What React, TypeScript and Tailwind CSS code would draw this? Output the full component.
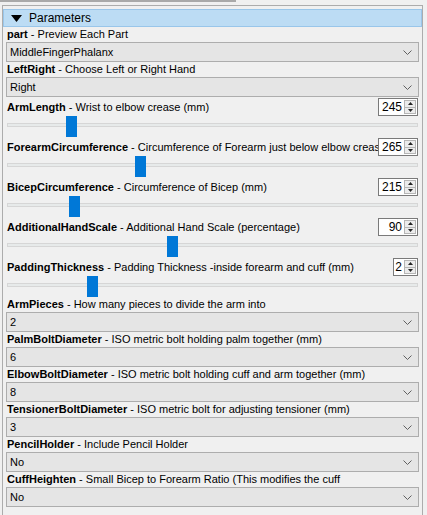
type Row =
  | { kind: 'select'; name: string; desc: string; value: string }
  | { kind: 'slider'; name: string; desc: string; value: number; thumb: number; boxW: number };

const ROWS: Row[] = [
  { kind: 'select', name: 'part', desc: 'Preview Each Part', value: 'MiddleFingerPhalanx' },
  { kind: 'select', name: 'LeftRight', desc: 'Choose Left or Right Hand', value: 'Right' },
  { kind: 'slider', name: 'ArmLength', desc: 'Wrist to elbow crease (mm)', value: 245, thumb: 59, boxW: 40 },
  { kind: 'slider', name: 'ForearmCircumference', desc: 'Circumference of Forearm just below elbow crease (mm)', value: 265, thumb: 128, boxW: 40 },
  { kind: 'slider', name: 'BicepCircumference', desc: 'Circumference of Bicep (mm)', value: 215, thumb: 62, boxW: 40 },
  { kind: 'slider', name: 'AdditionalHandScale', desc: 'Additional Hand Scale (percentage)', value: 90, thumb: 160, boxW: 40 },
  { kind: 'slider', name: 'PaddingThickness', desc: 'Padding Thickness -inside forearm and cuff (mm)', value: 2, thumb: 80, boxW: 25 },
  { kind: 'select', name: 'ArmPieces', desc: 'How many pieces to divide the arm into', value: '2' },
  { kind: 'select', name: 'PalmBoltDiameter', desc: 'ISO metric bolt holding palm together (mm)', value: '6' },
  { kind: 'select', name: 'ElbowBoltDiameter', desc: 'ISO metric bolt holding cuff and arm together (mm)', value: '8' },
  { kind: 'select', name: 'TensionerBoltDiameter', desc: 'ISO metric bolt for adjusting tensioner (mm)', value: '3' },
  { kind: 'select', name: 'PencilHolder', desc: 'Include Pencil Holder', value: 'No' },
  { kind: 'select', name: 'CuffHeighten', desc: 'Small Bicep to Forearm Ratio (This modifies the cuff', value: 'No' },
];

function Label({ name, desc }: { name: string; desc: string }) {
  return (
    <span className="whitespace-nowrap">
      <b className="font-bold">{name}</b> - {desc}
    </span>
  );
}

function Chevron() {
  return (
    <svg width="9" height="5" viewBox="0 0 9 5" fill="none" stroke="#606060" strokeWidth="1">
      <polyline points="0.5,0.5 4.5,4.5 8.5,0.5" />
    </svg>
  );
}

function SelectRow({ name, desc, value }: { name: string; desc: string; value: string }) {
  return (
    <div>
      <div className="h-[15px] flex items-center pl-1 overflow-hidden">
        <Label name={name} desc={desc} />
      </div>
      <div className="h-5 mx-[3px] flex items-center justify-between border border-[#adadad] bg-[#e5e5e5] pl-[3px] pr-[6px]">
        <span>{value}</span>
        <Chevron />
      </div>
    </div>
  );
}

function SpinBox({ value, width }: { value: number; width: number }) {
  return (
    <div className="h-[18px] flex border border-[#7a7a7a] bg-white shrink-0 text-[12px]" style={{ width }}>
      <span className="flex-1 text-right pr-[2px] leading-[16px]">{value}</span>
      <div className="w-[12px] my-[1px] mr-[1px] flex flex-col">
        <div className="flex-1 flex items-center justify-center border border-[#b5b5b5] bg-[#ececec]">
          <svg width="5" height="3" viewBox="0 0 5 3"><polygon points="2.5,0 5,3 0,3" fill="#222" /></svg>
        </div>
        <div className="flex-1 flex items-center justify-center border border-t-0 border-[#b5b5b5] bg-[#ececec]">
          <svg width="5" height="3" viewBox="0 0 5 3"><polygon points="0,0 5,0 2.5,3" fill="#222" /></svg>
        </div>
      </div>
    </div>
  );
}

function SliderRow({ name, desc, value, thumb, boxW }: { name: string; desc: string; value: number; thumb: number; boxW: number }) {
  return (
    <div>
      <div className="h-5 flex items-center pl-1 pr-1">
        <div className="flex-1 overflow-hidden">
          <Label name={name} desc={desc} />
        </div>
        <SpinBox value={value} width={boxW} />
      </div>
      <div className="relative h-5 mx-1 flex items-center">
        <div className="w-full h-[4px] -mt-[4px] border border-[#d6d6d6] bg-[#e7eaea]" />
        <div className="absolute -top-[1px] w-[11px] h-[21px] bg-[#0078d7]" style={{ left: thumb }} />
      </div>
    </div>
  );
}

export default function App() {
  return (
    <div className="w-[427px] h-[515px] overflow-hidden bg-[#f0f0f0] text-[11px] text-black font-['Liberation_Sans',Arial,sans-serif]">
      <div className="h-[5px]">
        <div className="w-[236px] h-[2px] bg-[#a9a9a9]" />
      </div>
      <div className="ml-[2px] w-[421px] h-[510px] border-l border-t border-r border-[#acacac] pt-[3px]">
        <div className="h-[18px] flex items-center gap-[7px] pl-[7px] bg-[#bcdcf4] border border-[#99c6ea] text-[12px]">
          <svg width="11" height="7" viewBox="0 0 11 7"><polygon points="0,0 11,0 5.5,7" fill="#000" /></svg>
          <span>Parameters</span>
        </div>
        {ROWS.map(r =>
          r.kind === 'select' ? (
            <SelectRow key={r.name} name={r.name} desc={r.desc} value={r.value} />
          ) : (
            <SliderRow key={r.name} name={r.name} desc={r.desc} value={r.value} thumb={r.thumb} boxW={r.boxW} />
          )
        )}
      </div>
    </div>
  );
}
